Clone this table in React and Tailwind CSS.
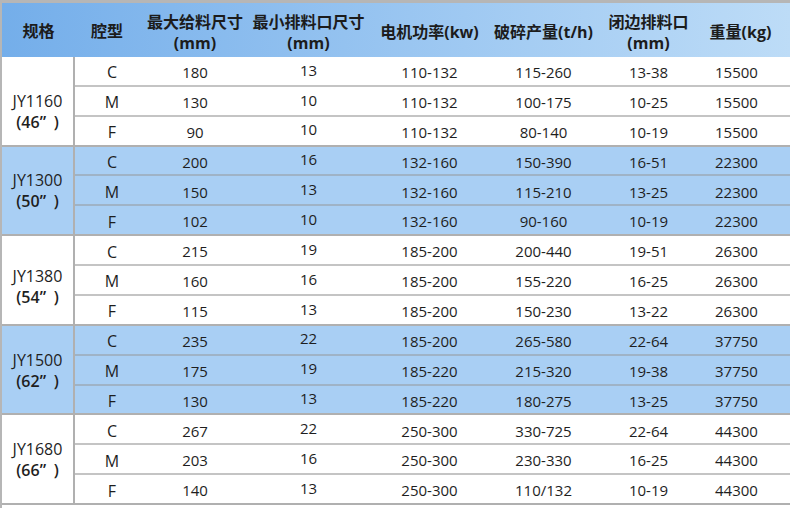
import React from "react";

const groups = [
  {
    model: "JY1160",
    size: "46",
    blue: false,
    shift: "pt-[22px]",
    rows: [
      ["C", "180", "13", "110-132", "115-260", "13-38", "15500"],
      ["M", "130", "10", "110-132", "100-175", "10-25", "15500"],
      ["F", "90", "10", "110-132", "80-140", "10-19", "15500"],
    ],
  },
  {
    model: "JY1300",
    size: "50",
    blue: true,
    shift: "pt-[2px]",
    rows: [
      ["C", "200", "16", "132-160", "150-390", "16-51", "22300"],
      ["M", "150", "13", "132-160", "115-210", "13-25", "22300"],
      ["F", "102", "10", "132-160", "90-160", "10-19", "22300"],
    ],
  },
  {
    model: "JY1380",
    size: "54",
    blue: false,
    shift: "pt-[14px]",
    rows: [
      ["C", "215", "19", "185-200", "200-440", "19-51", "26300"],
      ["M", "160", "16", "185-200", "155-220", "16-25", "26300"],
      ["F", "115", "13", "185-200", "150-230", "13-22", "26300"],
    ],
  },
  {
    model: "JY1500",
    size: "62",
    blue: true,
    shift: "pt-[2px]",
    rows: [
      ["C", "235", "22", "185-200", "265-580", "22-64", "37750"],
      ["M", "175", "19", "185-220", "215-320", "19-38", "37750"],
      ["F", "130", "13", "185-220", "180-275", "13-25", "37750"],
    ],
  },
  {
    model: "JY1680",
    size: "66",
    blue: false,
    shift: "pt-[2px]",
    rows: [
      ["C", "267", "22", "250-300", "330-725", "22-64", "44300"],
      ["M", "203", "16", "250-300", "230-330", "16-25", "44300"],
      ["F", "140", "13", "250-300", "110/132", "10-19", "44300"],
    ],
  },
];

// widths of the columns right of the model column
const cols = "grid grid-cols-[70px_100px_127px_115px_113px_97px_93px]";
const font = { fontFamily: '"Open Sans", "Noto Sans CJK SC", sans-serif' };

function Row({ cells, last, blue }) {
  return (
    <div
      className={`${cols} flex-1 items-center text-center ${
        last ? "" : blue ? "border-b-2 border-[#9fb3c6]" : "border-b-2 border-[#c4c4c4]"
      }`}
    >
      {cells.map((c, i) => (
        <div
          key={i}
          className={`${i === 2 ? "pb-[2px]" : "pt-[3px]"} ${
            i === 0 ? "pl-[4px] text-[16px]" : ""
          } ${i === 6 ? "pr-[14px]" : ""}`}
        >
          {c}
        </div>
      ))}
    </div>
  );
}

export default function App() {
  return (
    <div
      className="w-[790px] h-[508px] bg-white border-l-2 border-t-[3px] border-[#b6b6b6] text-[15px] text-[#1e1e1e] overflow-hidden"
      style={font}
    >
      <div className="flex h-[54px] items-center bg-gradient-to-r from-[#74aeea] to-[#bddcf7] font-bold text-[16px] leading-[21px] text-[#1c1c1c] text-center">
        <div className="w-[75px] pt-[2px]">规格</div>
        <div className={`${cols} flex-1 items-center`}>
          <div className="pt-[2px] pr-[6px]">腔型</div>
          <div className="pt-[6px]">
            最大给料尺寸
            <br />
            (mm)
          </div>
          <div className="pt-[6px]">
            最小排料口尺寸
            <br />
            (mm)
          </div>
          <div className="pt-[4px]">电机功率(kw)</div>
          <div className="pt-[4px]">破碎产量(t/h)</div>
          <div className="pt-[6px]">
            闭边排料口
            <br />
            (mm)
          </div>
          <div className="pt-[4px] pr-[6px]">重量(kg)</div>
        </div>
      </div>

      {groups.map((g) => (
        <div
          key={g.model}
          className={`flex h-[89.6px] border-b-2 border-[#b0b0b0] ${
            g.blue ? "bg-[#a9cff4]" : "bg-white"
          }`}
        >
          <div
            className={`w-[75px] border-r-2 border-[#b0b0b0] flex flex-col items-center justify-center text-[16px] leading-[21px] ${g.shift}`}
          >
            <div>{g.model}</div>
            <div className="font-semibold">
              ({g.size}
              <span className="inline-block w-[14px] text-left">”</span>)
            </div>
          </div>
          <div className="flex-1 flex flex-col">
            {g.rows.map((r, i) => (
              <Row key={i} cells={r} last={i === 2} blue={g.blue} />
            ))}
          </div>
        </div>
      ))}
    </div>
  );
}
